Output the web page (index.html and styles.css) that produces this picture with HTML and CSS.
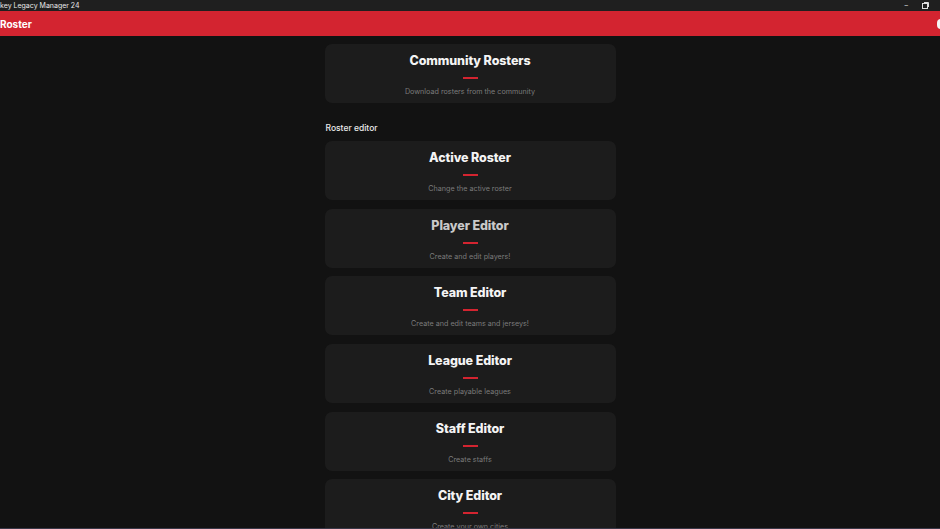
FILE: index.html
```html
<!DOCTYPE html>
<html lang="en">

<head>
    <meta charset="UTF-8">
    <meta name="viewport" content="width=device-width, initial-scale=1.0">
    <title>Hockey Legacy Manager 24</title>
    <link rel="stylesheet" href="styles.css">
</head>

<body>
    <div id="titleBar">
        <span id="appTitle">key Legacy Manager 24</span>
        <div id="windowControls">
            <span class="winButton">&#8211;</span>
            <span class="winButton">
                <svg width="7" height="7" viewBox="0 0 7 7">
                    <rect x="0.5" y="1.5" width="5" height="5" fill="none" stroke="#ddd" stroke-width="1" />
                    <path d="M2 0.5 H6.5 V5" fill="none" stroke="#ddd" stroke-width="1" />
                </svg>
            </span>
        </div>
    </div>
    <div id="header">
        <span id="headerTitle">Roster</span>
        <span id="headerDot"></span>
    </div>

    <div id="content">
        <div class="menuCard">
            <div class="cardTitle">Community Rosters</div>
            <div class="cardLine"></div>
            <div class="cardText">Download rosters from the community</div>
        </div>

        <div class="sectionLabel">Roster editor</div>

        <div class="menuCard">
            <div class="cardTitle">Active Roster</div>
            <div class="cardLine"></div>
            <div class="cardText">Change the active roster</div>
        </div>
        <div class="menuCard dim">
            <div class="cardTitle">Player Editor</div>
            <div class="cardLine"></div>
            <div class="cardText">Create and edit players!</div>
        </div>
        <div class="menuCard">
            <div class="cardTitle">Team Editor</div>
            <div class="cardLine"></div>
            <div class="cardText">Create and edit teams and jerseys!</div>
        </div>
        <div class="menuCard">
            <div class="cardTitle">League Editor</div>
            <div class="cardLine"></div>
            <div class="cardText">Create playable leagues</div>
        </div>
        <div class="menuCard">
            <div class="cardTitle">Staff Editor</div>
            <div class="cardLine"></div>
            <div class="cardText">Create staffs</div>
        </div>
        <div class="menuCard">
            <div class="cardTitle">City Editor</div>
            <div class="cardLine"></div>
            <div class="cardText">Create your own cities</div>
        </div>
    </div>
</body>

</html>
```

FILE: styles.css
```css
html,
body {
    height: 100%;
}

body {
    background-color: #121212;
    margin: 0;
    font-family: Inter, "Noto Sans", sans-serif;
    color: white;
    display: flex;
    flex-direction: column;
    overflow: hidden;
    border-bottom: 1px solid #3a3848;
    box-sizing: border-box;
}

#titleBar {
    height: 11px;
    flex-shrink: 0;
    background-color: #1f1f1f;
    display: flex;
    justify-content: space-between;
    align-items: center;
}

#appTitle {
    font-size: 7px;
    color: #e8e8e8;
    line-height: 11px;
}

#windowControls {
    display: flex;
    align-items: center;
    gap: 14px;
    padding-right: 11px;
}

.winButton {
    font-size: 7px;
    color: #ddd;
    line-height: 11px;
    display: flex;
    align-items: center;
}

#header {
    height: 25px;
    flex-shrink: 0;
    background-color: #d32430;
    display: flex;
    justify-content: space-between;
    align-items: center;
}

#headerTitle {
    font-size: 10px;
    font-weight: 700;
    color: white;
}

#headerDot {
    width: 4px;
    height: 10px;
    background-color: #f5f5f5;
    border-radius: 4px 0 0 4px;
    margin-right: -1px;
}

#content {
    width: 291px;
    margin: 8px auto 0;
    display: flex;
    flex-direction: column;
    gap: 8.6px;
}

.menuCard {
    height: 59px;
    flex-shrink: 0;
    background-color: #1c1c1c;
    border-radius: 7px;
    display: flex;
    flex-direction: column;
    align-items: center;
    box-sizing: border-box;
    padding-top: 9px;
}

.cardTitle {
    font-size: 12.5px;
    font-weight: 800;
    line-height: 16px;
    color: #f4f4f4;
    letter-spacing: -0.1px;
}

.menuCard.dim .cardTitle {
    color: #c9c9c9;
}

.cardLine {
    width: 15px;
    height: 2px;
    background-color: #d32430;
    margin-top: 8px;
}

.cardText {
    font-size: 7.2px;
    color: #7b7b7b;
    margin-top: 8px;
}

.sectionLabel {
    font-size: 8.5px;
    font-weight: 500;
    color: #eaeaea;
    padding: 11px 0 0 1px;
}
```
